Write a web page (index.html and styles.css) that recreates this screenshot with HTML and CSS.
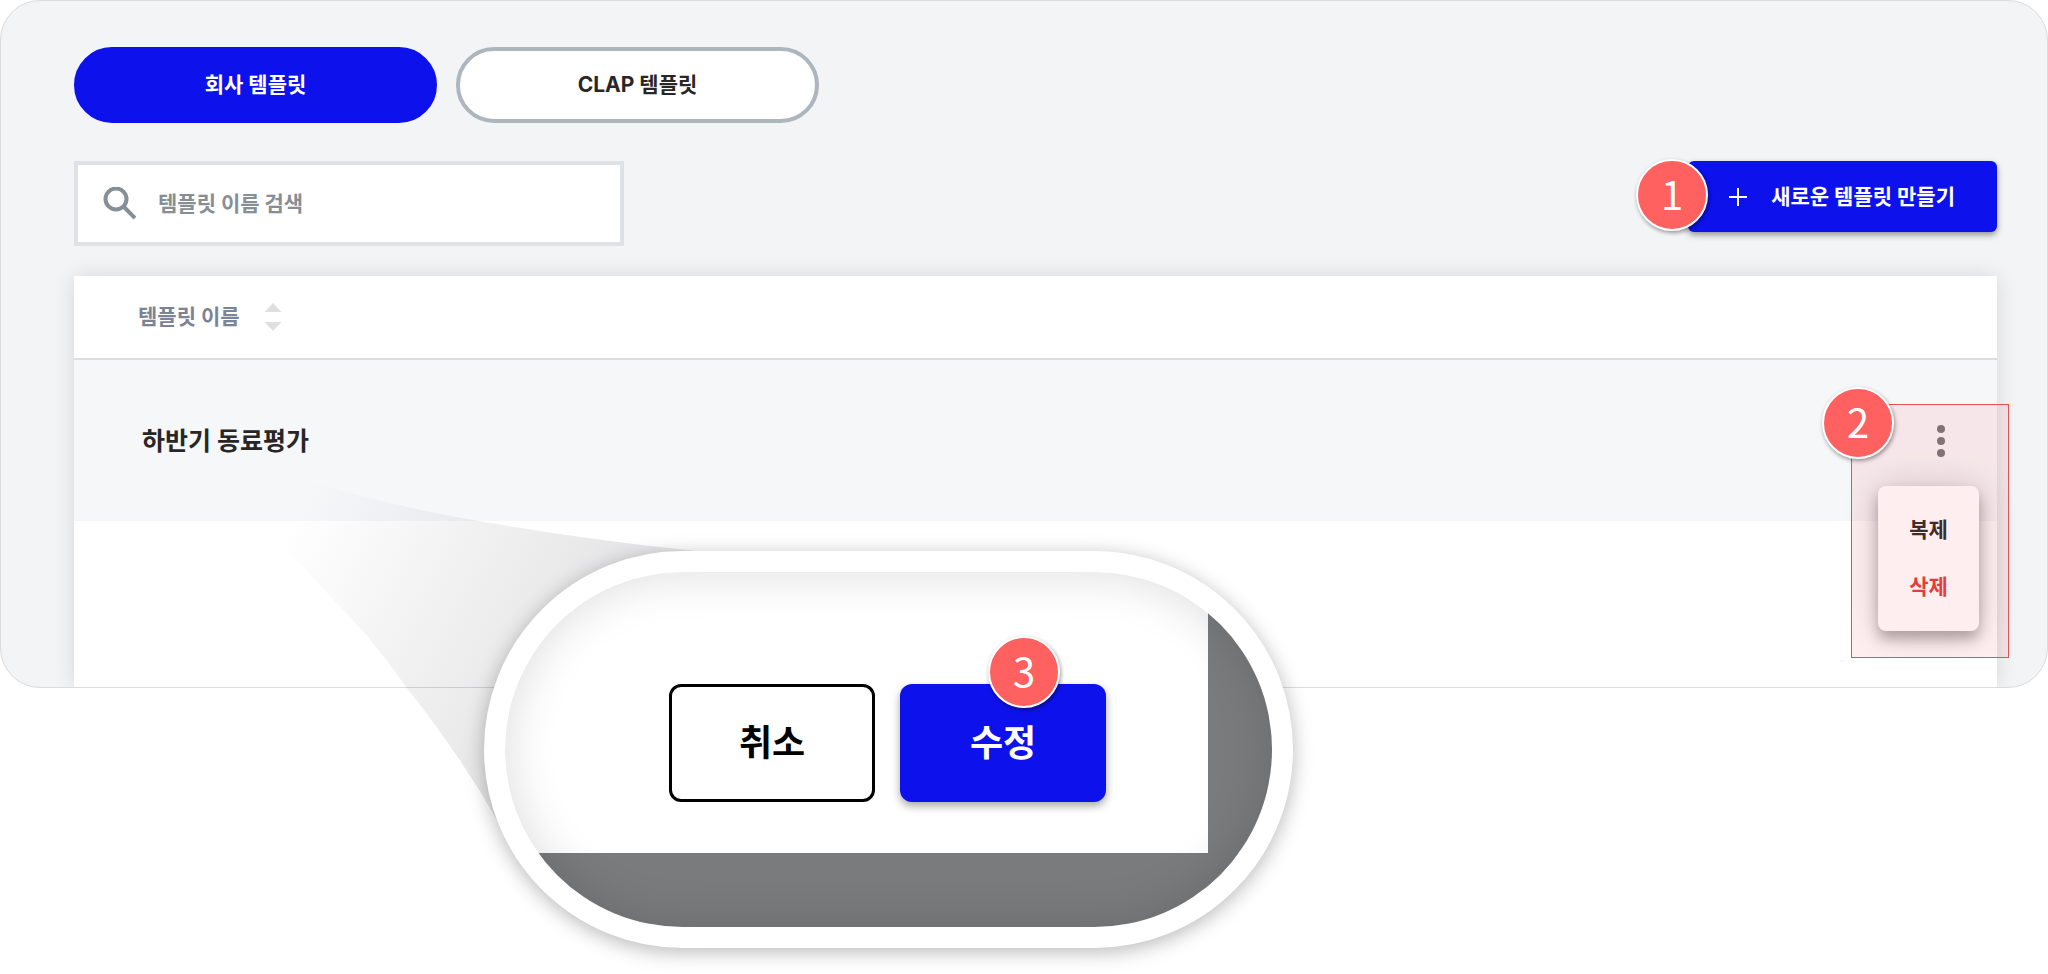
FILE: index.html
```
<!DOCTYPE html>
<html lang="ko">
<head>
    <meta charset="UTF-8">
    <meta name="viewport" content="width=device-width, initial-scale=1.0">
    <title>회사 템플릿</title>
    <link rel="stylesheet" href="styles.css">
</head>
<body>
    <main class="panel">
        <div class="tabs">
            <button type="button" class="tab active">회사 템플릿</button>
            <button type="button" class="tab">CLAP 템플릿</button>
        </div>
        <div class="toolbar">
            <label class="search">
                <svg width="34" height="34" viewBox="0 0 34 34" fill="none" stroke="#868e96" stroke-width="4">
                    <circle cx="14" cy="12" r="10.500"/>
                    <path d="M21.500 19.500L33 31"/>
                </svg>
                <input type="text" placeholder="템플릿 이름 검색" aria-label="템플릿 이름 검색">
            </label>
            <div class="create">
                <button type="button" class="btn-create">
                    <svg width="18" height="18" viewBox="0 0 18 18" stroke="#fff" stroke-width="2">
                        <path d="M9 0v18M0 9h18"/>
                    </svg>
                    새로운 템플릿 만들기
                </button>
                <span class="badge badge-create">1</span>
            </div>
        </div>
        <div class="list">
            <table>
                <thead>
                    <tr>
                        <th colspan="2">
                            <button type="button" class="sort">
                                템플릿 이름
                                <svg width="18" height="30" viewBox="0 0 18 30" fill="#dfdfdf">
                                    <path d="M9 1l8.500 9h-17zM9 29l8.500-9h-17z"/>
                                </svg>
                            </button>
                        </th>
                    </tr>
                </thead>
                <tbody>
                    <tr>
                        <td class="name">하반기 동료평가</td>
                        <td class="actions">
                            <div class="more-wrap">
                                <button type="button" class="more" aria-label="더보기">
                                    <svg width="8" height="32" viewBox="0 0 8 32" fill="#757575">
                                        <circle cx="4" cy="4" r="4"/>
                                        <circle cx="4" cy="16" r="4"/>
                                        <circle cx="4" cy="28" r="4"/>
                                    </svg>
                                </button>
                                <div class="menu">
                                    <button type="button">복제</button>
                                    <button type="button" class="delete">삭제</button>
                                </div>
                                <div class="highlight"></div>
                                <span class="badge badge-menu">2</span>
                            </div>
                        </td>
                    </tr>
                </tbody>
            </table>
        </div>
    </main>

    <section class="zoom">
        <svg class="beam" width="460" height="360" viewBox="0 0 460 360">
            <defs>
                <linearGradient id="beam" gradientUnits="userSpaceOnUse" x1="50" y1="50" x2="320" y2="190">
                    <stop offset="0" stop-color="#5a5a64" stop-opacity="0"/>
                    <stop offset="1" stop-color="#5a5a64" stop-opacity="0.150"/>
                </linearGradient>
            </defs>
            <path fill="url(#beam)" d="M0 0Q40 2 75 13Q160 38 239 51Q340 69 456 81L456 360H264Q257 352 257 350Q218 282 166 217Q130 165 88 124Q40 70 0 40z"/>
        </svg>
        <div class="lens">
            <div class="dialog">
                <button type="button" class="btn-cancel">취소</button>
                <div class="edit">
                    <button type="button" class="btn-edit">수정</button>
                    <span class="badge badge-edit">3</span>
                </div>
            </div>
        </div>
    </section>
</body>
</html>
```
FILE: styles.css
```
*{
    box-sizing: border-box;
}
body{
    margin: 0;
    background-color: #fff;
    color: #292626;
    font-family: Inter, "Noto Sans CJK KR", sans-serif;
    font-size: 21px;
    line-height: 32px;
    font-weight: 700;
}
button, input{
    font: inherit;
    color: inherit;
    border: 0;
    margin: 0;
    padding: 0;
    background: none;
}
svg{
    display: block;
    flex: none;
}
.panel{
    padding: 46px 50px 0 73px;
    background-color: #f2f4f6;
    border: 1px solid #d9dbdd;
    border-radius: 40px;
    overflow: hidden;
}

/* tabs */
.tabs{
    display: flex;
    gap: 19px;
}
.tab{
    width: 363px;
    height: 76px;
    background-color: #fff;
    border: 4px solid #adb5bd;
    border-radius: 38px;
}
.tab.active{
    background-color: #0d12ec;
    border-color: #0d12ec;
    color: #fff;
}

/* search + create */
.toolbar{
    display: flex;
    justify-content: space-between;
    align-items: flex-start;
    margin-top: 38px;
}
.search{
    display: flex;
    align-items: center;
    gap: 22px;
    width: 550px;
    height: 85px;
    padding: 0 24px;
    background-color: #fff;
    border: 4px solid #dee2e6;
}
.search input{
    flex: 1;
    min-width: 0;
    outline: none;
}
.search input::placeholder{
    color: #868e96;
    opacity: 1;
}
.create, .edit{
    position: relative;
}
.btn-create{
    display: flex;
    align-items: center;
    gap: 24px;
    height: 71px;
    padding: 0 42px 0 41px;
    background-color: #0d12ec;
    border-radius: 6px;
    box-shadow: 0 3px 6px rgba(0, 0, 0, .4);
    color: #fff;
}

/* numbered markers */
.badge{
    position: absolute;
    width: 72px;
    height: 72px;
    background-color: #ff6060;
    border: 2px solid #fff;
    border-radius: 50%;
    box-shadow: 1px 2px 4px rgba(0, 0, 0, .4);
    color: #fff;
    font-family: "Noto Sans CJK KR", sans-serif;
    font-size: 40px;
    font-weight: 400;
    line-height: 64px;
    text-align: center;
}
.badge-create{
    top: -2px;
    left: -52px;
}
.badge-menu{
    top: -38px;
    right: 103px;
}
.badge-edit{
    top: -48px;
    left: 88px;
}

/* template list */
.list{
    min-height: 411px;
    margin-top: 30px;
    background-color: #fff;
    box-shadow: 0 0 20px rgba(0, 0, 0, .12);
}
table{
    width: 100%;
    border-collapse: collapse;
}
th{
    height: 83px;
    padding: 0 64px;
    border-bottom: 2px solid #dcdddf;
    text-align: left;
}
.sort{
    display: flex;
    align-items: center;
    gap: 24px;
    color: #7b8494;
}
td{
    height: 162px;
    padding: 0;
    background-color: #f5f7f9;
}
.name{
    padding-left: 68px;
    font-size: 25px;
}
.actions{
    width: 112px;
}
.more-wrap{
    position: relative;
    display: flex;
    justify-content: center;
}
.more{
    padding: 0 4px;
}
.menu{
    position: absolute;
    top: 61px;
    right: 18px;
    display: flex;
    flex-direction: column;
    justify-content: center;
    gap: 25px;
    width: 101px;
    height: 145px;
    background-color: #fff;
    border-radius: 8px;
    box-shadow: 0 8px 14px rgba(0, 0, 0, .3), 0 0 36px rgba(0, 0, 0, .16);
}
.delete{
    color: #e03a3a;
}
.highlight{
    position: absolute;
    top: -21px;
    right: -12px;
    width: 158px;
    height: 254px;
    background-color: rgba(255, 90, 95, .1);
    border: 1px solid #e95050;
    pointer-events: none;
}

/* magnified dialog */
.zoom{
    position: relative;
    width: 809px;
    margin: -137px 0 25px 484px;
}
.beam{
    position: absolute;
    top: -81px;
    left: -244px;
}
.lens{
    position: relative;
    height: 397px;
    background-color: #fff;
    border: 21px solid #fff;
    border-radius: 199px;
    box-shadow: 0 4px 20px rgba(0, 0, 0, .28);
    overflow: hidden;
}
.lens::after{
    content: "";
    position: absolute;
    inset: 0;
    border-radius: 178px;
    box-shadow: inset 0 0 50px rgba(0, 0, 0, .14);
    pointer-events: none;
}
.dialog{
    display: flex;
    justify-content: flex-end;
    gap: 25px;
    height: 100%;
    padding: 112px 102px 0 0;
    border: 0 solid #7a7b7d;
    border-width: 0 64px 74px 0;
    background-color: #fff;
    font-size: 36px;
}
.btn-cancel, .btn-edit{
    width: 206px;
    height: 118px;
    border-radius: 12px;
}
.btn-cancel{
    border: 3px solid #000;
    color: #000;
}
.btn-edit{
    background-color: #0d12ec;
    box-shadow: 0 4px 8px rgba(0, 0, 0, .35);
    color: #fff;
}
```
